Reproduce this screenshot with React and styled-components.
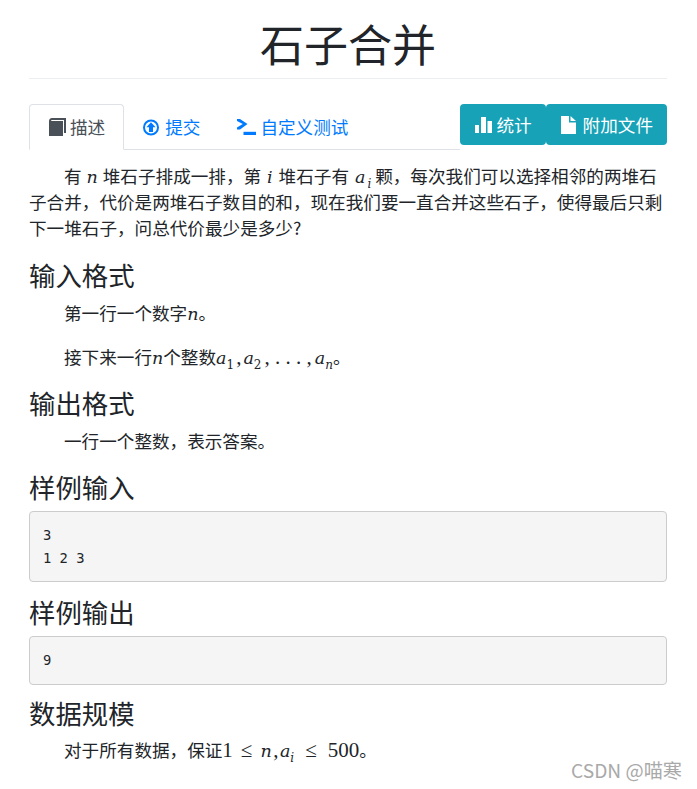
import React from "react";
import styled, { createGlobalStyle } from "styled-components";

const GlobalStyle = createGlobalStyle`
  html, body {
    margin: 0;
    padding: 0;
    background: #fff;
  }
  body {
    font-family: "Noto Sans CJK SC", "Liberation Sans", sans-serif;
    color: #212529;
    font-size: 17.6px;
    line-height: 26px;
  }
`;

const Page = styled.div`
  position: relative;
  box-sizing: border-box;
  width: 697px;
  height: 789px;
  padding: 0 30px 0 29px;
  overflow: hidden;
`;

const Title = styled.h1`
  margin: 0;
  padding-top: 14px;
  box-sizing: border-box;
  border-bottom: 1px solid #eceeef;
  height: 79px;
  font-size: 44px;
  line-height: 58px;
  font-weight: 400;
  text-align: center;
`;

const TabBar = styled.div`
  display: flex;
  align-items: flex-start;
  margin-top: 25px;
`;

const Tabs = styled.nav`
  flex: 1;
  display: flex;
  height: 46px;
  box-sizing: border-box;
  border-bottom: 1px solid #dee2e6;
`;

const Tab = styled.a`
  display: flex;
  align-items: center;
  gap: ${(p) => p.$gap}px;
  height: 46px;
  box-sizing: border-box;
  padding: 0 18px 0 ${(p) => p.$left}px;
  border: 1px solid ${(p) => (p.$active ? "#dee2e6" : "transparent")};
  border-bottom-color: ${(p) => (p.$active ? "#fff" : "transparent")};
  border-radius: 4px 4px 0 0;
  color: ${(p) => (p.$active ? "#495057" : "#007bff")};
`;

const Actions = styled.div`
  display: flex;
`;

const ActionButton = styled.button`
  display: flex;
  align-items: center;
  gap: ${(p) => p.$gap}px;
  height: 41px;
  padding: 0 14px 0 15px;
  border: none;
  border-radius: 4px;
  background: #17a2b8;
  color: #fff;
  font: inherit;
`;

const Body = styled.p`
  margin: ${(p) => p.$top || 0}px 0 0;
  text-indent: 35px;
`;

const Heading = styled.h4`
  margin: ${(p) => p.$top}px 0 0;
  font-size: 26.4px;
  line-height: 32px;
  font-weight: 400;
`;

const Sample = styled.pre`
  margin: 8px 0 0;
  box-sizing: border-box;
  height: ${(p) => p.$height}px;
  padding: 12px 13px 0;
  background: #f5f5f5;
  border: 1px solid #ccc;
  border-radius: 4px;
  font-family: "DejaVu Sans Mono", "Liberation Mono", monospace;
  font-size: 13.8px;
  line-height: 23px;
`;

const Var = styled.i`
  font-family: "DejaVu Serif", serif;
  font-size: 17.5px;
  line-height: 0;
  padding: 0 ${(p) => p.$pad || 0}px;
`;

const Num = styled.span`
  font-family: "Liberation Serif", serif;
  font-size: 21px;
  line-height: 0;
  padding: 0 ${(p) => p.$pad || 0}px;
`;

const Sub = styled.sub`
  font-family: "DejaVu Serif", serif;
  font-size: 12px;
  line-height: 0;
  font-style: ${(p) => (p.$italic ? "italic" : "normal")};
`;

const Watermark = styled.div`
  position: absolute;
  left: 571px;
  top: 757px;
  font-size: 19.2px;
  color: #a9a9a9;
  white-space: nowrap;
`;

const BookIcon = () => (
  <svg width="17" height="18" viewBox="0 0 17 18" fill="#495057">
    <path d="M0 3C0 1 1.5 0 3 0H17V15H15V2H3.5C2.5 2 2 2.5 2 3H14V18H0z" />
  </svg>
);

const UploadIcon = () => (
  <svg width="16" height="17" viewBox="0 0 16 17" fill="none">
    <circle cx="8" cy="8.5" r="7" stroke="#007bff" strokeWidth="2" />
    <path d="M8 3.2 12.6 8.2H10V13H6V8.2H3.4z" fill="#007bff" />
  </svg>
);

const TerminalIcon = () => (
  <svg width="19" height="16" viewBox="0 0 19 16" fill="#007bff">
    <path d="M0 0H3L10.5 5 3 10.5H0V8.6L5.8 5.1 0 2z" />
    <rect x="6.5" y="12.8" width="12.5" height="3.2" />
  </svg>
);

const ChartIcon = () => (
  <svg width="17" height="16" viewBox="0 0 17 16" fill="#fff">
    <rect x="0" y="8" width="4" height="8" />
    <rect x="6" y="0" width="5" height="16" />
    <rect x="12.5" y="4" width="4.5" height="12" />
  </svg>
);

const FileIcon = () => (
  <svg width="15" height="18" viewBox="0 0 15 18" fill="#fff">
    <path d="M0 0H8V6.5H15V18H0z" />
    <path d="M9.5 0 15 5H9.5z" />
  </svg>
);

export default function App() {
  return (
    <Page>
      <GlobalStyle />
      <Title>石子合并</Title>

      <TabBar>
        <Tabs>
          <Tab $active $left={19} $gap={4}>
            <BookIcon />
            描述
          </Tab>
          <Tab $left={18} $gap={6}>
            <UploadIcon />
            提交
          </Tab>
          <Tab $left={17} $gap={4}>
            <TerminalIcon />
            自定义测试
          </Tab>
        </Tabs>
        <Actions>
          <ActionButton $gap={4}>
            <ChartIcon />
            统计
          </ActionButton>
          <ActionButton $gap={7}>
            <FileIcon />
            附加文件
          </ActionButton>
        </Actions>
      </TabBar>

      <Body $top={13}>
        有 <Var $pad={1}>n</Var> 堆石子排成一排，第 <Var $pad={2}>i</Var> 堆石子有 <Var $pad={2}>a</Var>
        <Sub $italic>i</Sub> 颗，每次我们可以选择相邻的两堆石子合并，代价是两堆石子数目的和，现在我们要一直合并这些石子，使得最后只剩下一堆石子，问总代价最少是多少?
      </Body>

      <Heading $top={18}>输入格式</Heading>
      <Body $top={9}>
        第一行一个数字<Var>n</Var>。
      </Body>
      <Body $top={18}>
        接下来一行<Var>n</Var>个整数<Var>a</Var>
        <Sub>1</Sub>
        <Num $pad={2}>,</Num>
        <Var>a</Var>
        <Sub>2</Sub>
        <Num $pad={3}>, . . . ,</Num>
        <Var>a</Var>
        <Sub $italic>n</Sub>。
      </Body>

      <Heading $top={17}>输出格式</Heading>
      <Body $top={9}>一行一个整数，表示答案。</Body>

      <Heading $top={17}>样例输入</Heading>
      <Sample $height={71}>{"3\n1 2 3"}</Sample>

      <Heading $top={14}>样例输出</Heading>
      <Sample $height={49}>9</Sample>

      <Heading $top={12}>数据规模</Heading>
      <Body $top={8}>
        对于所有数据，保证<Num>1</Num>
        <Num $pad={8}>≤</Num>
        <Var>n</Var>
        <Num $pad={1.5}>,</Num>
        <Var>a</Var>
        <Sub $italic>i</Sub>
        <Num $pad={11}>≤</Num>
        <Num>500</Num>。
      </Body>

      <Watermark>CSDN @喵寒</Watermark>
    </Page>
  );
}
